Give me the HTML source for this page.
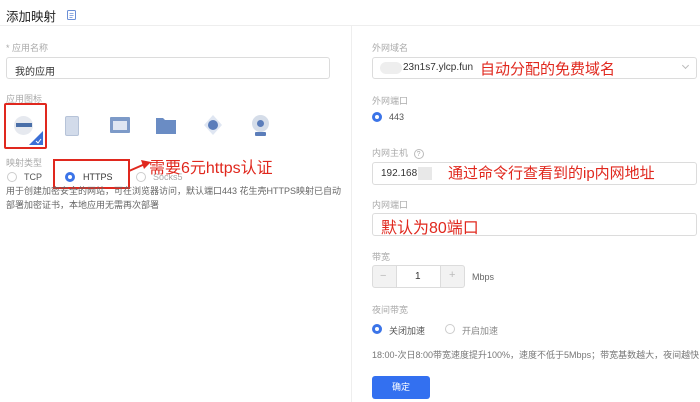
<!DOCTYPE html>
<html><head><meta charset="utf-8"><style>
*{margin:0;padding:0;box-sizing:border-box}
body{width:700px;height:402px;background:#fff;position:relative;overflow:hidden;font-family:"Liberation Sans","Noto Sans CJK SC",sans-serif;color:#333}
.a{position:absolute;white-space:nowrap}
.lbl{font-size:9px;color:#aaa}
.inp{position:absolute;border:1px solid #dcdcdc;border-radius:3px;background:#fff}
.red{color:#e0281e;font-size:15px}
.rad{position:absolute;width:10px;height:10px;border-radius:50%;border:1px solid #ccc;background:#fff}
.rad.on{border:3px solid #3b74e8}
.t9{font-size:9px;color:#555}
</style></head><body>
<div class="a" style="left:6px;top:6px;font-size:12.5px;color:#222">添加映射</div>
<svg class="a" style="left:67px;top:10px" width="9" height="10"><rect x="0.5" y="0.5" width="8" height="9" rx="1" fill="none" stroke="#6b8fd6"/><path d="M2.5 3.5h4M2.5 5.5h4M2.5 7.5h3" stroke="#6b8fd6" stroke-width="0.8"/></svg>
<div class="a" style="left:0;top:25px;width:700px;height:1px;background:#eee"></div>
<div class="a" style="left:351px;top:26px;width:1px;height:376px;background:#eee"></div>

<div class="a lbl" style="left:6px;top:41px">* 应用名称</div>
<div class="inp" style="left:6px;top:57px;width:324px;height:22px"></div>
<div class="a" style="left:15px;top:63px;font-size:10px;color:#333">我的应用</div>
<div class="a lbl" style="left:6px;top:92px">应用图标</div>
<div class="a" style="left:4px;top:103px;width:43px;height:46px;border:2px solid #e0281e;border-radius:2px"></div>
<div class="a" style="left:14px;top:116px;width:19px;height:19px;border-radius:50%;background:#e6e9ef"></div>
<div class="a" style="left:16px;top:123px;width:16px;height:4px;background:#4a6fa8"></div>
<svg class="a" style="left:29px;top:131px" width="14" height="14"><path d="M14 0V14H0Z" fill="#3b6fd6"/><path d="M7 10l2 2 3-4" stroke="#fff" fill="none" stroke-width="1"/></svg>
<div class="a" style="left:65px;top:116px;width:14px;height:20px;border-radius:2px;background:#d2dbea;border:1px solid #b6c3d8"></div>
<div class="a" style="left:110px;top:117px;width:20px;height:16px;background:#7d9ac8;border-radius:1px"></div>
<div class="a" style="left:113px;top:121px;width:14px;height:9px;background:#dfe6f2"></div>
<svg class="a" style="left:156px;top:116px" width="20" height="18"><path d="M0 2h7l2 2h11v14H0z" fill="#6a8cc4"/></svg>
<svg class="a" style="left:204px;top:115px" width="18" height="20"><path d="M9 0L18 10 9 20 0 10z" fill="#dfe6f2"/><circle cx="9" cy="10" r="5" fill="#5b7dba"/></svg>
<div class="a" style="left:252px;top:115px;width:17px;height:17px;border-radius:50%;background:#d5dde9"></div>
<div class="a" style="left:257px;top:120px;width:7px;height:7px;border-radius:50%;background:#5b7dba"></div>
<div class="a" style="left:255px;top:132px;width:11px;height:4px;background:#5b7dba;border-radius:1px"></div>

<div class="a lbl" style="left:6px;top:156px">映射类型</div>
<div class="rad" style="left:7px;top:172px"></div><div class="a t9" style="left:24px;top:172px">TCP</div>
<div class="rad on" style="left:65px;top:172px"></div><div class="a t9" style="left:83px;top:172px;color:#333">HTTPS</div>
<div class="rad" style="left:136px;top:172px"></div><div class="a t9" style="left:153px;top:172px;color:#aaa">Socks5</div>
<div class="a" style="left:53px;top:159px;width:77px;height:30px;border:2px solid #e0281e"></div>
<svg class="a" style="left:128px;top:158px" width="24" height="16"><path d="M1 13L17 6" stroke="#e0281e" stroke-width="2"/><path d="M13 2L23 4 16 11z" fill="#e0281e"/></svg>
<div class="a red" style="left:149px;top:154px;font-size:16px">需要6元https认证</div>
<div class="a t9" style="left:6px;top:184px;color:#666">用于创建加密安全的网站，可在浏览器访问，默认端口443 花生壳HTTPS映射已自动</div>
<div class="a t9" style="left:6px;top:198px;color:#666">部署加密证书，本地应用无需再次部署</div>

<div class="a lbl" style="left:372px;top:41px">外网域名</div>
<div class="inp" style="left:372px;top:57px;width:325px;height:22px"></div>
<div class="a" style="left:380px;top:62px;width:22px;height:12px;background:#eee;border-radius:6px"></div>
<div class="a" style="left:403px;top:62px;font-size:10px;color:#333">23n1s7.ylcp.fun</div>
<div class="a red" style="left:480px;top:58px">自动分配的免费域名</div>
<div class="a" style="left:683px;top:63px;width:5px;height:5px;border-right:1px solid #bbb;border-bottom:1px solid #bbb;transform:rotate(45deg)"></div>
<div class="a lbl" style="left:372px;top:94px">外网端口</div>
<div class="rad on" style="left:372px;top:112px"></div><div class="a t9" style="left:389px;top:112px">443</div>
<div class="a lbl" style="left:372px;top:146px">内网主机 <span style="display:inline-block;width:10px;height:10px;border:1px solid #bbb;border-radius:50%;font-size:7px;text-align:center;line-height:9px;margin-left:3px">?</span></div>
<div class="inp" style="left:372px;top:162px;width:325px;height:23px"></div>
<div class="a" style="left:381px;top:168px;font-size:10px;color:#333">192.168</div>
<div class="a" style="left:418px;top:167px;width:14px;height:13px;background:#e8e8e8"></div>
<div class="a red" style="left:448px;top:162px">通过命令行查看到的ip内网地址</div>
<div class="a lbl" style="left:372px;top:198px">内网端口</div>
<div class="inp" style="left:372px;top:213px;width:325px;height:23px"></div>
<div class="a red" style="left:381px;top:214px;font-size:16px">默认为80端口</div>

<div class="a lbl" style="left:372px;top:250px">带宽</div>
<div class="inp" style="left:372px;top:265px;width:93px;height:23px;background:#f2f2f2"></div>
<div class="a" style="left:396px;top:266px;width:45px;height:21px;background:#fff;border-left:1px solid #dcdcdc;border-right:1px solid #dcdcdc"></div>
<div class="a" style="left:380px;top:270px;font-size:11px;color:#bbb">−</div>
<div class="a" style="left:415px;top:271px;font-size:10px;color:#333">1</div>
<div class="a" style="left:449px;top:269px;font-size:11px;color:#bbb">+</div>
<div class="a t9" style="left:472px;top:272px;color:#666">Mbps</div>
<div class="a lbl" style="left:372px;top:303px">夜间带宽</div>
<div class="rad on" style="left:372px;top:324px"></div><div class="a t9" style="left:389px;top:324px">关闭加速</div>
<div class="rad" style="left:445px;top:324px"></div><div class="a t9" style="left:462px;top:324px;color:#888">开启加速</div>
<div class="a t9" style="left:372px;top:348px;color:#777">18:00-次日8:00带宽速度提升100%，速度不低于5Mbps；带宽基数越大，夜间越快</div>
<div class="a" style="left:372px;top:376px;width:58px;height:23px;background:#3370f0;border-radius:3px;color:#fff;font-size:9px;text-align:center;line-height:23px">确定</div>
</body></html>
